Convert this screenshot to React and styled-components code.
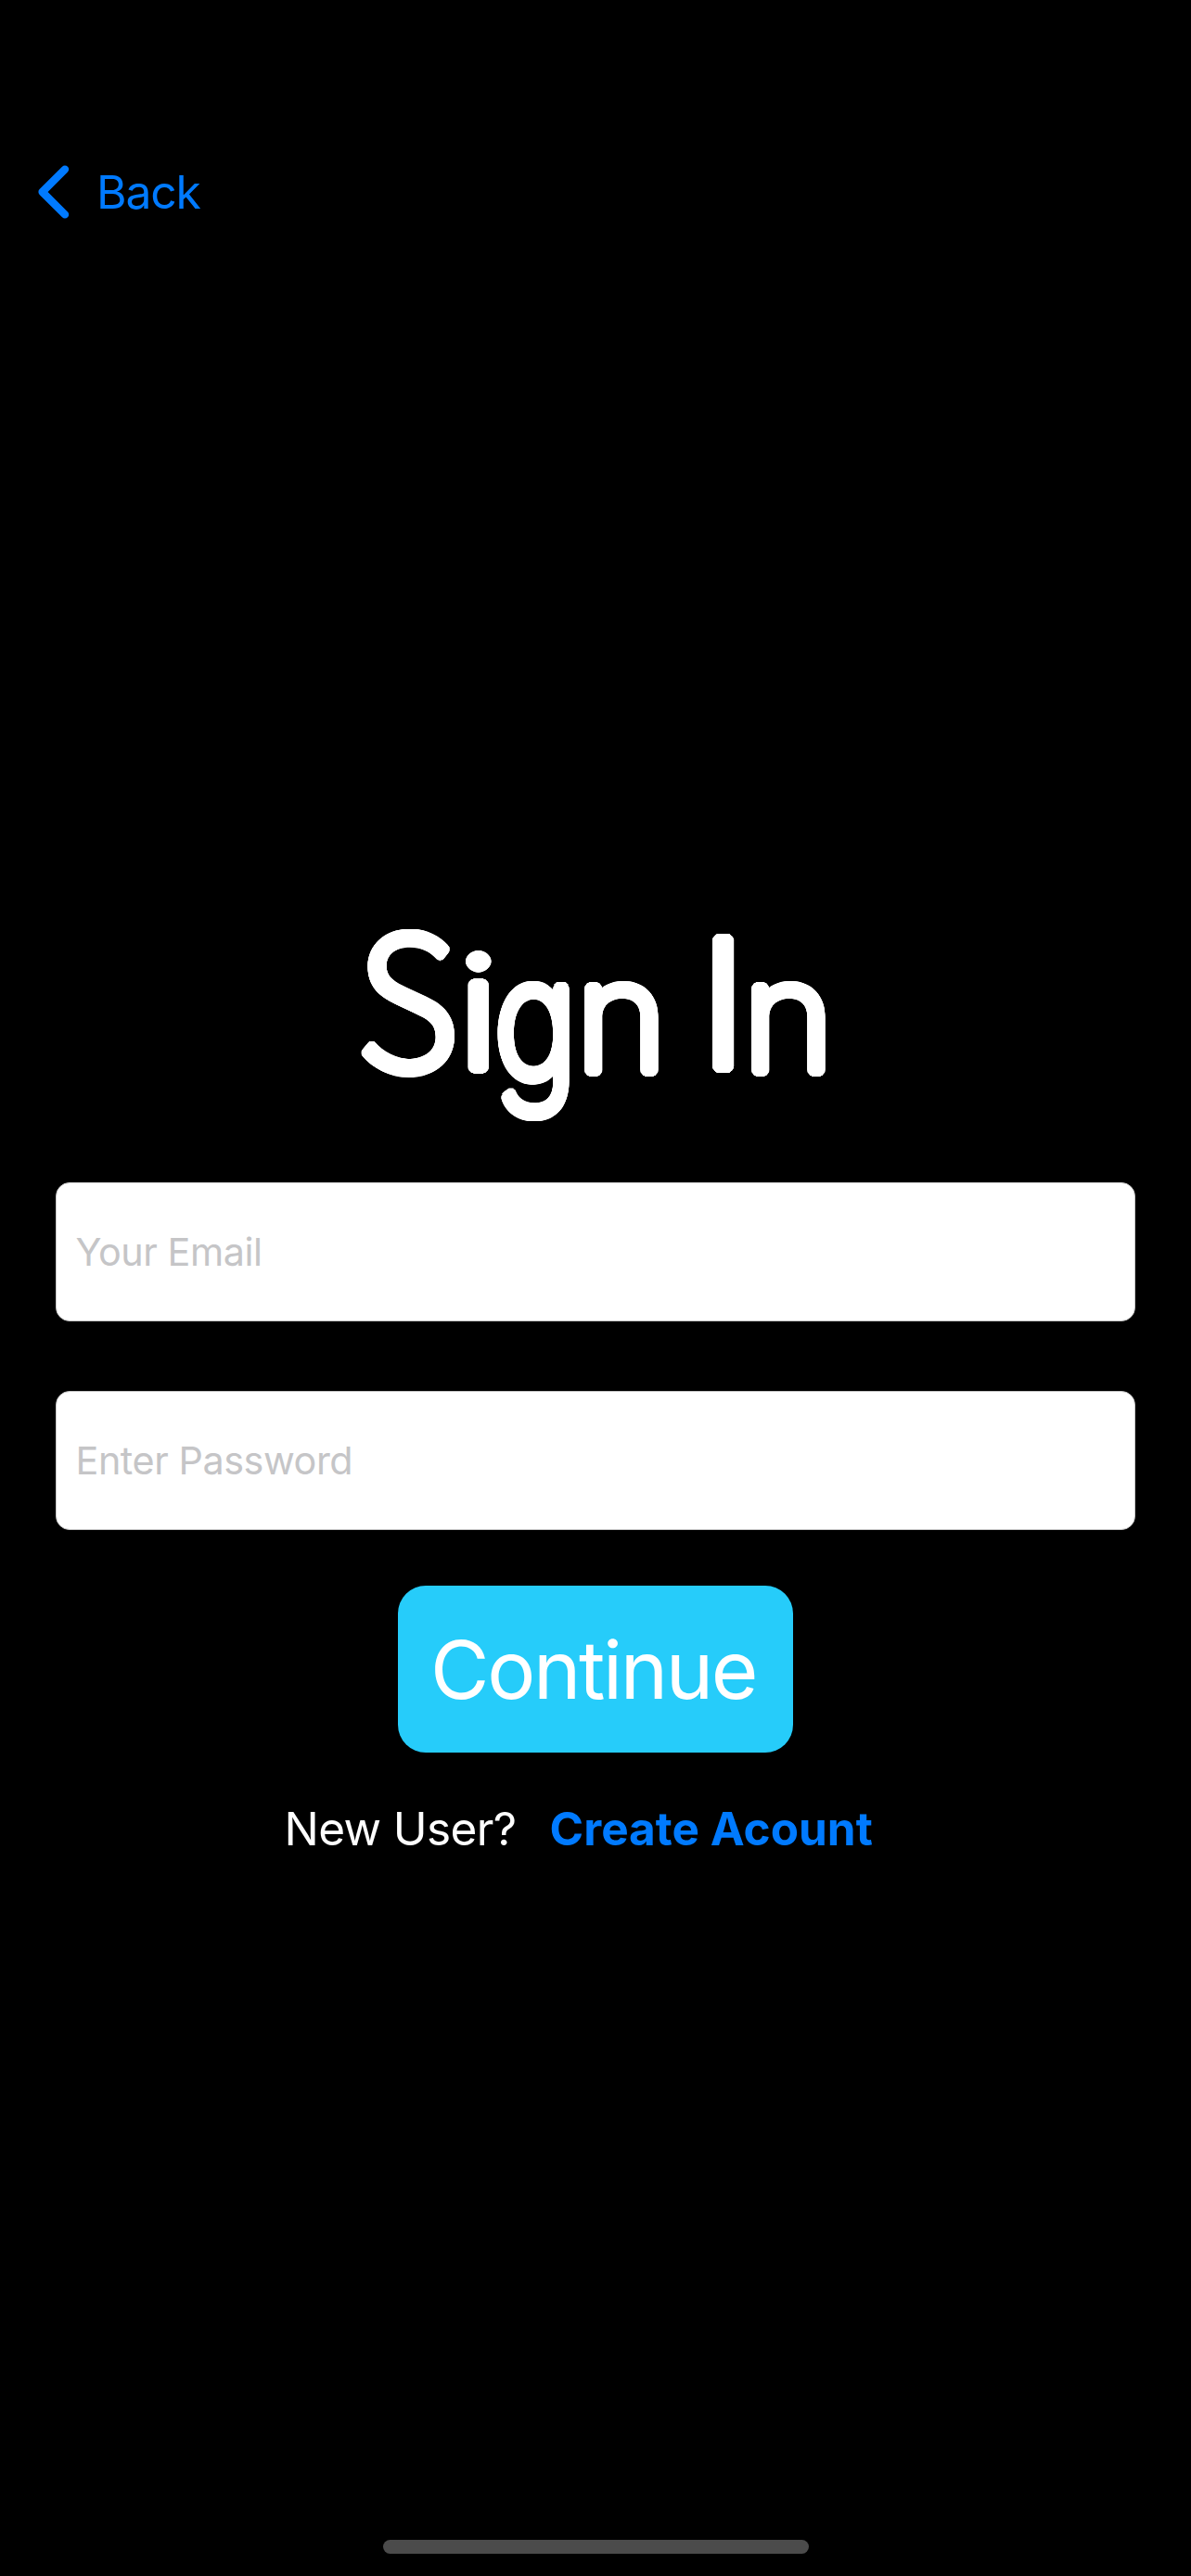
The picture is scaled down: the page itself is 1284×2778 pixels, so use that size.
import React from "react";
import styled, { createGlobalStyle } from "styled-components";

const GlobalStyle = createGlobalStyle`
  *, *::before, *::after { box-sizing: border-box; }
  body { margin: 0; background: #000; }
`;

const Screen = styled.main`
  display: flex;
  flex-direction: column;
  width: 1284px;
  height: 2778px;
  overflow: hidden;
  background: #000;
  color: #fff;
  font-family: Inter, "Liberation Sans", sans-serif;
`;

const NavBar = styled.nav`
  padding: 177px 0 0 41px;
  height: 237px;
`;

const BackButton = styled.a`
  display: flex;
  align-items: center;
  gap: 29px;
  width: max-content;
  color: #007aff;
  font-size: 49.8px;
  line-height: 60px;
  letter-spacing: -1.15px;
  text-decoration: none;
`;

const Chevron = styled.svg`
  width: 34px;
  height: 58px;
  fill: none;
  stroke: currentColor;
  stroke-width: 8.4;
  stroke-linecap: round;
  stroke-linejoin: round;
`;

const Form = styled.form`
  display: flex;
  flex-direction: column;
  align-items: center;
  padding: 727px 60px 0;
`;

/* Rings of solid shadows thicken thin letters into round marker strokes. */
const ring = (radius) =>
  Array.from({ length: 32 }, (_, i) => {
    const a = (i / 32) * Math.PI * 2;
    return `${(Math.cos(a) * radius).toFixed(2)}px ${(Math.sin(a) * radius).toFixed(2)}px 0 #fff`;
  }).join(", ");

const Title = styled.h1`
  align-self: flex-start;
  display: flex;
  margin: 0 0 69px 324.4px;
  height: 242px;
  font-size: 200px;
  font-weight: 200;
  line-height: 242px;
  white-space: pre;
`;

const Letter = styled.span`
  display: block;
  width: ${(p) => p.$width}px;
  text-shadow: ${(p) => ring(p.$round || 7)}, ${(p) => ring((p.$round || 7) / 2)};
  transform-origin: 0 194px;
  transform: translateY(${(p) => p.$drop || 0}px) rotate(${(p) => p.$turn || 0}deg)
    scale(${(p) => p.$sx}, ${(p) => p.$sy});
`;

const Capital = styled(Letter)`
  font-family: "Noto Sans CJK JP", sans-serif;
  font-weight: 300;
  transform-origin: 0 208px;
`;

const Field = styled.input`
  width: 1164px;
  height: 150px;
  margin-bottom: ${(p) => p.$gap}px;
  padding: 0 20.5px;
  border: 1px solid #c8c8c8;
  border-radius: 15px;
  outline: 0;
  background: #fff;
  color: #000;
  font-family: inherit;
  font-size: 41.3px;
  line-height: 50px;
  letter-spacing: -0.43px;

  &::placeholder {
    color: #c5c5c7;
    opacity: 1;
  }
`;

const ContinueButton = styled.button`
  width: 426px;
  height: 180px;
  padding: 0 5px 0 0;
  border: 0;
  border-radius: 30px;
  background: #26ccfa;
  color: #fff;
  font-family: inherit;
  font-size: 87px;
  line-height: 105px;
  letter-spacing: -2.4px;
`;

const SignUpRow = styled.p`
  align-self: flex-start;
  display: flex;
  gap: 36px;
  margin: 52px 0 0 246.5px;
  font-size: 49.5px;
  line-height: 60px;
  letter-spacing: -0.6px;
`;

const SignUpLink = styled.a`
  color: #007aff;
  font-weight: 700;
  letter-spacing: 0;
  text-decoration: none;
`;

const HomeIndicator = styled.div`
  width: 459px;
  height: 15px;
  margin: auto auto 24px 413px;
  flex: none;
  border-radius: 8px;
  background: #4b4b4b;
`;

export default function App() {
  return (
    <>
      <GlobalStyle />
      <Screen>
        <NavBar>
          <BackButton>
            <Chevron viewBox="0 0 34 58">
              <path d="M29 4.6 4.6 29 29 53.4" />
            </Chevron>
            Back
          </BackButton>
        </NavBar>
        <Form>
          <Title>
            <Capital $width={109.2} $sx={0.95} $sy={1} $drop={-18} $round={4.5}>S</Capital>
            <Letter $width={39.1} $sx={0.97} $sy={0.83} $drop={-6}>i</Letter>
            <Letter $width={88.1} $sx={0.75} $sy={0.905} $drop={6}>g</Letter>
            <Letter $width={90} $sx={0.833} $sy={0.82} $drop={-3}>n</Letter>
            <Letter $width={43.2} $sx={1} $sy={1}> </Letter>
            <Letter $width={46.8} $sx={1} $sy={0.944} $drop={-7.6}>I</Letter>
            <Letter $width={90} $sx={0.833} $sy={0.82} $drop={-3}>n</Letter>
          </Title>
          <Field placeholder="Your Email" $gap={75} />
          <Field placeholder="Enter Password" $gap={60} />
          <ContinueButton type="button">Continue</ContinueButton>
          <SignUpRow>
            New User?
            <SignUpLink>Create Acount</SignUpLink>
          </SignUpRow>
        </Form>
        <HomeIndicator />
      </Screen>
    </>
  );
}
